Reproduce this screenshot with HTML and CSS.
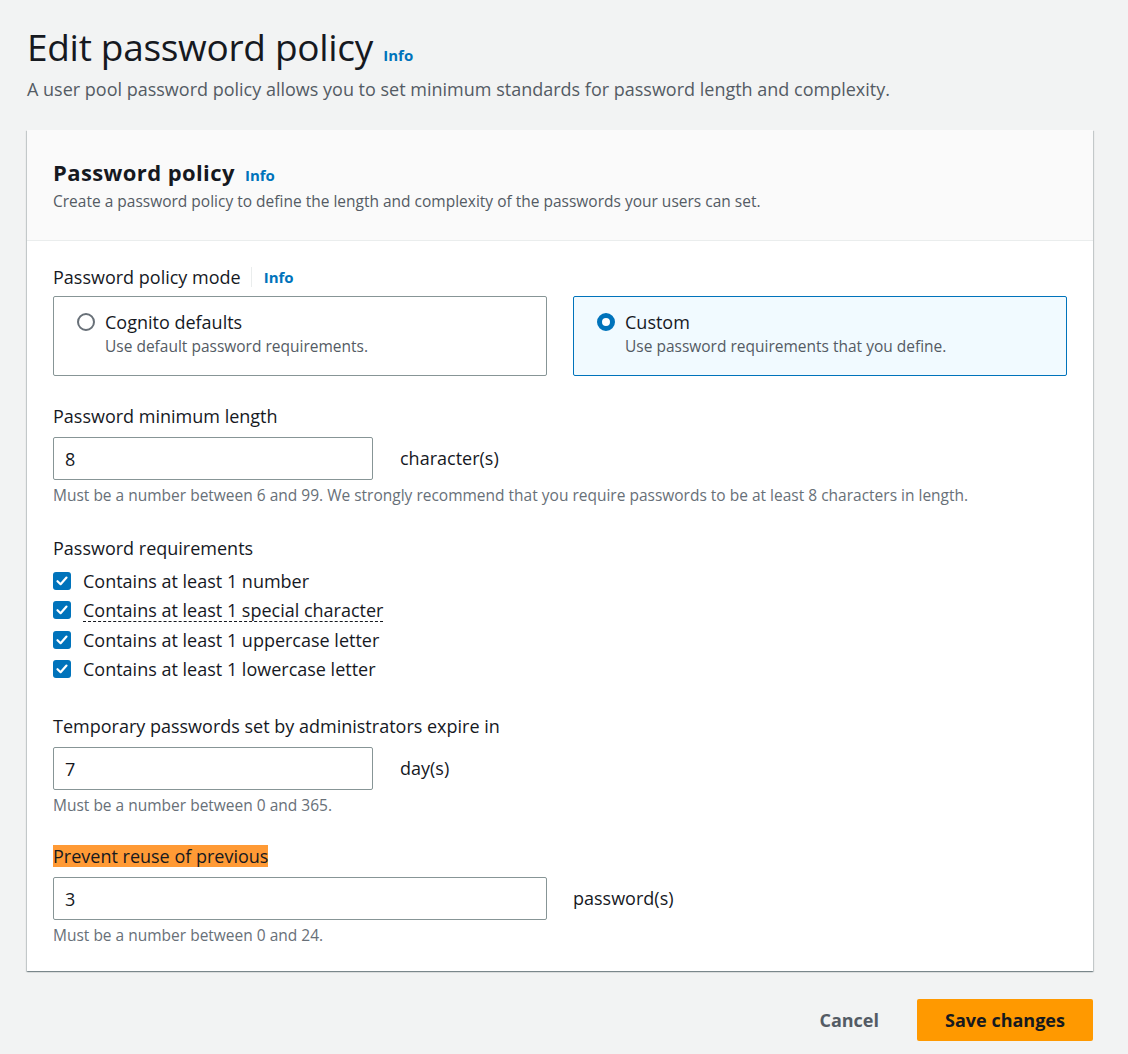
FILE: index.html
```html
<!DOCTYPE html>
<html lang="en">
<head>
<meta charset="utf-8">
<title>Edit password policy</title>
<link rel="stylesheet" href="styles.css">
</head>
<body>
<div class="page">
  <header class="page-header">
    <h1 class="page-title">Edit password policy <a class="info" href="#">Info</a></h1>
    <p class="page-desc">A user pool password policy allows you to set minimum standards for password length and complexity.</p>
  </header>

  <section class="card">
    <div class="card-header">
      <h2 class="card-title">Password policy <a class="info" href="#">Info</a></h2>
      <p class="card-desc">Create a password policy to define the length and complexity of the passwords your users can set.</p>
    </div>
    <div class="card-body">
      <div class="field field-mode">
        <div class="label">Password policy mode <span class="sep"></span><a class="info" href="#">Info</a></div>
        <div class="tiles">
          <div class="tile">
            <span class="radio"></span>
            <div class="tile-text">
              <div class="tile-title">Cognito defaults</div>
              <div class="tile-desc">Use default password requirements.</div>
            </div>
          </div>
          <div class="tile tile-selected">
            <span class="radio radio-on"></span>
            <div class="tile-text">
              <div class="tile-title">Custom</div>
              <div class="tile-desc">Use password requirements that you define.</div>
            </div>
          </div>
        </div>
      </div>

      <div class="field field-len">
        <div class="label">Password minimum length</div>
        <div class="input-row">
          <div class="input input-short">8</div>
          <span class="suffix">character(s)</span>
        </div>
        <div class="hint">Must be a number between 6 and 99. We strongly recommend that you require passwords to be at least 8 characters in length.</div>
      </div>

      <div class="field field-req">
        <div class="label">Password requirements</div>
        <ul class="checks">
          <li class="check"><span class="box"><svg viewBox="0 0 14 14" width="14" height="14"><path d="M2.5 7.2 L5.6 10.2 L11.5 3.6" fill="none" stroke="#fff" stroke-width="2.2" stroke-linecap="round" stroke-linejoin="round"/></svg></span><span>Contains at least 1 number</span></li>
          <li class="check"><span class="box"><svg viewBox="0 0 14 14" width="14" height="14"><path d="M2.5 7.2 L5.6 10.2 L11.5 3.6" fill="none" stroke="#fff" stroke-width="2.2" stroke-linecap="round" stroke-linejoin="round"/></svg></span><span class="dashed">Contains at least 1 special character</span></li>
          <li class="check"><span class="box"><svg viewBox="0 0 14 14" width="14" height="14"><path d="M2.5 7.2 L5.6 10.2 L11.5 3.6" fill="none" stroke="#fff" stroke-width="2.2" stroke-linecap="round" stroke-linejoin="round"/></svg></span><span>Contains at least 1 uppercase letter</span></li>
          <li class="check"><span class="box"><svg viewBox="0 0 14 14" width="14" height="14"><path d="M2.5 7.2 L5.6 10.2 L11.5 3.6" fill="none" stroke="#fff" stroke-width="2.2" stroke-linecap="round" stroke-linejoin="round"/></svg></span><span>Contains at least 1 lowercase letter</span></li>
        </ul>
      </div>

      <div class="field field-temp">
        <div class="label">Temporary passwords set by administrators expire in</div>
        <div class="input-row">
          <div class="input input-short">7</div>
          <span class="suffix">day(s)</span>
        </div>
        <div class="hint">Must be a number between 0 and 365.</div>
      </div>

      <div class="field field-reuse">
        <div class="label"><mark class="mark">Prevent reuse of previous</mark></div>
        <div class="input-row input-row-wide">
          <div class="input input-wide">3</div>
          <span class="suffix">password(s)</span>
        </div>
        <div class="hint">Must be a number between 0 and 24.</div>
      </div>
    </div>
  </section>

  <div class="actions">
    <a class="btn-link" href="#">Cancel</a>
    <button class="btn-primary" type="button">Save changes</button>
  </div>
</div>
</body>
</html>
```

FILE: styles.css
```css
* { box-sizing: border-box; }

html, body {
  margin: 0;
  padding: 0;
  background: #f2f3f3;
}

body {
  font-family: "Open Sans", "Noto Sans", sans-serif;
  color: #16191f;
  font-size: 18px;
}

.page {
  width: 1066px;
  margin-left: 27px;
  padding-top: 22px;
}

.page-title {
  margin: 0;
  font-size: 37px;
  font-weight: 400;
  line-height: 50px;
  letter-spacing: -0.3px;
}

.info {
  font-size: 15px;
  font-weight: 700;
  color: #0073bb;
  text-decoration: none;
  letter-spacing: 0;
  vertical-align: baseline;
}

.page-title .info { margin-left: 1px; }

.page-desc {
  margin: -2px 0 0;
  font-size: 18px;
  line-height: 22px;
  color: #545b64;
}

.card {
  margin-top: 30px;
  background: #fff;
  box-shadow: 0 1px 1px 0 rgba(0, 28, 36, 0.3), 1px 1px 1px 0 rgba(0, 28, 36, 0.15), -1px 1px 1px 0 rgba(0, 28, 36, 0.15);
}

.card-header {
  background: #fafafa;
  border-bottom: 1px solid #eaeded;
  padding: 27px 26px 28px;
}

.card-title {
  margin: 0;
  font-size: 22px;
  font-weight: 700;
  line-height: 30px;
  letter-spacing: 0.4px;
}

.card-title .info { margin-left: 4px; }

.card-desc {
  margin: 1px 0 0;
  font-size: 15.5px;
  line-height: 21px;
  color: #545b64;
}

.card-body {
  padding: 25px 26px 26px;
  display: flex;
  flex-direction: column;
}

.label {
  font-size: 18px;
  line-height: 22px;
  display: flex;
  align-items: center;
}

.sep {
  display: inline-block;
  width: 1px;
  height: 20px;
  background: #eaeded;
  margin: 0 12px 0 10px;
}

.tiles {
  margin-top: 8px;
  display: grid;
  grid-template-columns: 1fr 1fr;
  gap: 26px;
}

.tile {
  border: 1px solid #879596;
  border-radius: 2px;
  padding: 14px 20px 17px 23px;
  display: flex;
  gap: 10px;
  min-height: 80px;
}

.tile-selected {
  border-color: #0073bb;
  background: #f1faff;
}

.radio {
  flex: none;
  width: 18px;
  height: 18px;
  border-radius: 50%;
  border: 2px solid #687078;
  margin-top: 2px;
  background: #fff;
}

.radio-on {
  border: 5px solid #0073bb;
}

.tile-title {
  font-size: 18px;
  line-height: 22px;
}

.tile-desc {
  margin-top: 3px;
  font-size: 15.5px;
  line-height: 20px;
  color: #545b64;
}

.field-len { margin-top: 29px; }
.field-req { margin-top: 32px; }
.field-temp { margin-top: 31px; }
.field-reuse { margin-top: 30px; }

.input-row {
  margin-top: 10px;
  display: flex;
  align-items: center;
  gap: 27px;
}

.input-row-wide { gap: 26px; }

.input {
  height: 43px;
  border: 1px solid #879596;
  border-radius: 2px;
  background: #fff;
  padding: 0 11px;
  display: flex;
  align-items: center;
  font-size: 18px;
}

.input-short { width: 320px; }
.input-wide { width: 494px; }

.suffix {
  font-size: 18px;
  line-height: 22px;
  margin-top: -2px;
}

.hint {
  margin-top: 5px;
  font-size: 15.5px;
  line-height: 20px;
  color: #687078;
}

.checks {
  list-style: none;
  margin: 7px 0 0;
  padding: 0;
}

.check {
  display: flex;
  align-items: center;
  gap: 12px;
  height: 29.5px;
  font-size: 18px;
}

.box {
  flex: none;
  width: 18px;
  height: 18px;
  border-radius: 3px;
  background: #0073bb;
  display: flex;
  align-items: center;
  justify-content: center;
}

.dashed {
  border-bottom: 1px dashed #16191f;
  line-height: 21px;
  margin-top: 2px;
}

.mark {
  background: #ff9a35;
  color: #16191f;
  padding: 0;
  line-height: 22px;
}

.actions {
  display: flex;
  justify-content: flex-end;
  align-items: center;
  gap: 38px;
  margin-top: 28px;
}

.btn-link {
  color: #545b64;
  font-weight: 700;
  font-size: 18px;
  text-decoration: none;
}

.btn-primary {
  width: 176px;
  height: 42px;
  background: #ff9900;
  border: none;
  border-radius: 2px;
  font-family: inherit;
  font-size: 18px;
  font-weight: 700;
  color: #16191f;
  padding: 0;
}
```
